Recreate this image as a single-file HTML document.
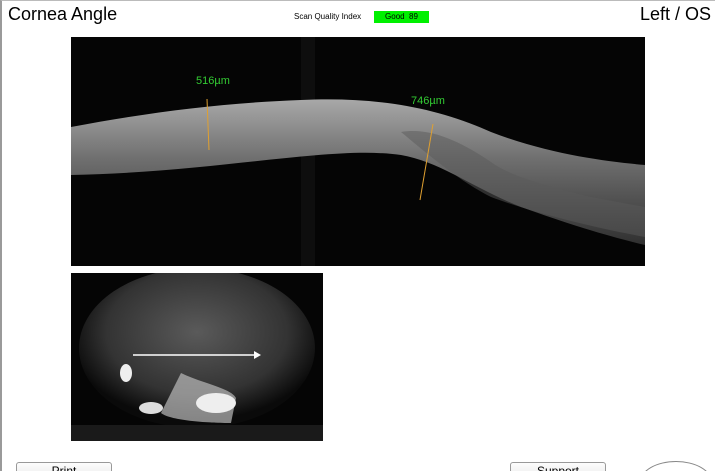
<!DOCTYPE html>
<html style="overflow:hidden;width:715px;height:471px"><head><style>
body{margin:0;width:715px;height:471px;overflow:hidden;background:#fff;font-family:"Liberation Sans",sans-serif;position:relative}
.frame{position:absolute;left:0;top:0;width:713px;height:470px;border-left:2px solid #9a9a9a;border-top:1px solid #bbb}
.t{position:absolute;color:#000}
.btn{position:absolute;top:462px;height:20px;border:1px solid #999;border-radius:3px;background:linear-gradient(#fdfdfd,#e4e4e4);font-size:12px;text-align:center;line-height:16px}
</style></head><body>
<div class="frame"></div>
<div class="t" style="left:8px;top:4px;font-size:18px">Cornea Angle</div>
<div class="t" style="left:294px;top:12px;font-size:8px">Scan Quality Index</div>
<div style="position:absolute;left:374px;top:11px;width:55px;height:12px;background:#00f000;font-size:8px;line-height:12px;text-align:center">Good&nbsp; 89</div>
<div class="t" style="left:640px;top:4px;font-size:18px">Left / OS</div>
<svg style="position:absolute;left:71px;top:37px" width="574" height="229">
<defs><linearGradient id="g" x1="0" y1="0" x2="0" y2="1"><stop offset="0" stop-color="#a8a8a8"/><stop offset=".4" stop-color="#707070"/><stop offset="1" stop-color="#303030"/></linearGradient></defs>
<rect width="574" height="229" fill="#050505"/>
<rect x="230" width="14" height="229" fill="#0e0e0e"/>
<path d="M0,90 C80,75 150,66 230,63 C300,60 360,68 420,95 C480,118 540,125 574,128 L574,208 C540,200 500,188 450,170 C400,150 370,125 330,118 C260,108 150,135 0,138 Z" fill="url(#g)"/>
<path d="M330,95 C360,90 390,105 420,125 C440,140 480,150 520,160 L574,170 L574,200 C520,190 460,175 420,160 C390,145 360,120 330,95Z" fill="#5a5a5a" opacity=".5"/>
<line x1="136" y1="62" x2="138" y2="113" stroke="#e0a030" stroke-width="1"/>
<line x1="362" y1="87" x2="349" y2="163" stroke="#e0a030" stroke-width="1"/>
<text x="125" y="47" fill="#3c3" font-size="11">516µm</text>
<text x="340" y="67" fill="#3c3" font-size="11">746µm</text>
</svg>
<svg style="position:absolute;left:71px;top:273px" width="252" height="168">
<defs><radialGradient id="r" cx=".5" cy=".4" r=".55"><stop offset="0" stop-color="#5a5a5a"/><stop offset=".7" stop-color="#333"/><stop offset="1" stop-color="#0a0a0a"/></radialGradient></defs>
<rect width="252" height="168" fill="#050505"/>
<ellipse cx="126" cy="75" rx="118" ry="80" fill="url(#r)"/>
<rect x="0" y="152" width="252" height="16" fill="#1a1a1a"/>
<path d="M110,100 C130,110 160,115 165,125 L160,150 C140,150 100,148 90,140Z" fill="#bbb" opacity=".7"/>
<ellipse cx="55" cy="100" rx="6" ry="9" fill="#eee"/>
<ellipse cx="80" cy="135" rx="12" ry="6" fill="#ddd"/>
<ellipse cx="145" cy="130" rx="20" ry="10" fill="#eee"/>
<line x1="62" y1="82" x2="185" y2="82" stroke="#fff" stroke-width="1.5"/>
<path d="M183,78 L190,82 L183,86Z" fill="#fff"/>
</svg>
<div class="btn" style="left:16px;width:94px">Print</div>
<div class="btn" style="left:510px;width:94px">Support</div>
<div style="position:absolute;left:640px;top:461px;width:70px;height:40px;border:1px solid #888;border-radius:50%"></div>
</body></html>
